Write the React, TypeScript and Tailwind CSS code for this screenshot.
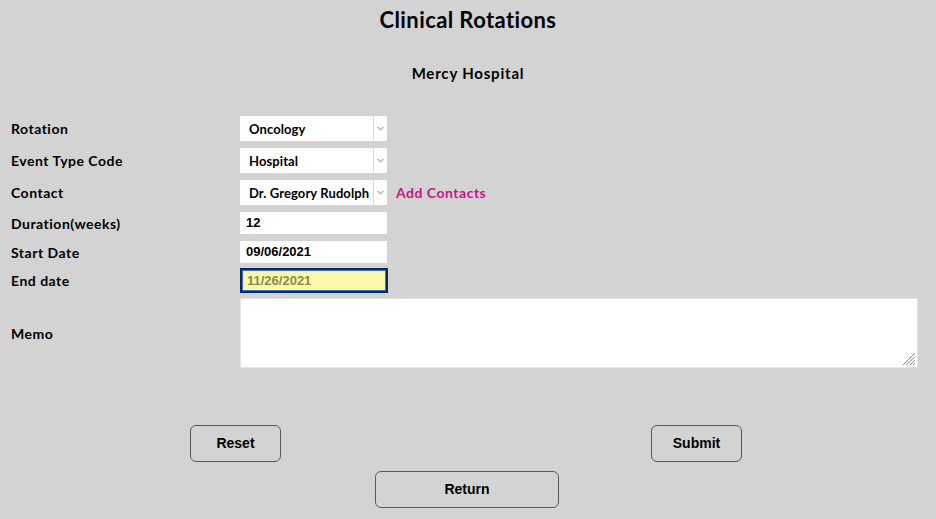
import React from "react";

const geo = { fontFamily: "Lato, 'Noto Sans', sans-serif" };
const arial = { fontFamily: "'Liberation Sans', Arial, sans-serif" };

function Select({ value }: { value: string }) {
  return (
    <div className="flex h-[25px] w-[147px] bg-white">
      <div className="flex flex-1 items-center pl-[9px] pt-[3px] text-[13px] font-bold tracking-[0.1px] text-black whitespace-nowrap overflow-hidden" style={geo}>
        {value}
      </div>
      <div className="flex w-[14px] items-center justify-center border-l border-[#d6d6d6]">
        <svg width="7" height="5" viewBox="0 0 7 5">
          <path d="M0.5 1 L3.5 3.8 L6.5 1" fill="none" stroke="#a8a8a8" strokeWidth="1.1" />
        </svg>
      </div>
    </div>
  );
}

function Row({ label, children, className }: { label: string; children: React.ReactNode; className: string }) {
  return (
    <div className={`flex items-center ${className}`}>
      <div className="w-[240px] pl-[11px] text-[14px] font-bold tracking-[0.5px] text-black" style={geo}>
        {label}
      </div>
      {children}
    </div>
  );
}

export default function App() {
  return (
    <div className="min-h-[519px] w-[936px] bg-[#d3d3d3] text-black">
      <div className="flex h-[38px] items-center justify-center text-[22px] font-bold tracking-[0.4px]" style={geo}>
        Clinical Rotations
      </div>
      <div className="mt-[25px] flex h-[20px] items-center justify-center text-[15px] font-bold tracking-[0.8px]" style={geo}>
        Mercy Hospital
      </div>
      <div className="mt-[33px] flex flex-col">
        <Row label="Rotation" className="h-[25px]">
          <Select value="Oncology" />
        </Row>
        <Row label="Event Type Code" className="mt-[7px] h-[25px]">
          <Select value="Hospital" />
        </Row>
        <Row label="Contact" className="mt-[6px] h-[26px]">
          <Select value="Dr. Gregory Rudolph" />
          <span className="ml-[9px] text-[14px] font-bold tracking-[0.5px] text-[#c71585]" style={geo}>
            Add Contacts
          </span>
        </Row>
        <Row label="Duration(weeks)" className="mt-[7px] h-[22px]">
          <div className="flex h-[22px] w-[147px] items-center bg-white pl-[6px] text-[13px] font-bold" style={arial}>
            12
          </div>
        </Row>
        <Row label="Start Date" className="mt-[7px] h-[22px]">
          <div className="flex h-[22px] w-[147px] items-center bg-white pl-[6px] text-[13px] font-bold" style={arial}>
            09/06/2021
          </div>
        </Row>
        <Row label="End date" className="mt-[5px] h-[25px]">
          <div
            className="flex h-[25px] w-[148px] items-center border-2 border-[#0a2a5c] bg-[#f8f8a8] pl-[5px] text-[13px] font-bold text-[#8c8c4a] shadow-[0_0_0_1px_#3b6fd0_inset]"
            style={arial}
          >
            11/26/2021
          </div>
        </Row>
        <Row label="Memo" className="mt-[5px] h-[70px]">
          <div className="relative h-[70px] w-[678px]">
            <textarea
              className="block h-[70px] w-[678px] resize-none border border-[#e4e4e4] bg-white outline-none"
              defaultValue=""
            />
            <svg className="absolute bottom-[2px] right-[2px]" width="15" height="15" viewBox="0 0 15 15">
              <path d="M14 2 L2 14 M14 5.5 L5.5 14 M14 9 L9 14 M14 12 L12 14" stroke="#858585" strokeWidth="1" fill="none" />
            </svg>
          </div>
        </Row>
      </div>
      <div className="mt-[57px] flex">
        <button
          className="ml-[190px] h-[37px] w-[91px] rounded-[6px] border border-[#5a5a5a] text-[14px] font-bold"
          style={arial}
        >
          Reset
        </button>
        <button
          className="ml-[370px] h-[37px] w-[91px] rounded-[6px] border border-[#5a5a5a] text-[14px] font-bold"
          style={arial}
        >
          Submit
        </button>
      </div>
      <div className="mt-[9px] flex">
        <button
          className="ml-[375px] h-[37px] w-[184px] rounded-[6px] border border-[#5a5a5a] text-[14px] font-bold"
          style={arial}
        >
          Return
        </button>
      </div>
    </div>
  );
}
